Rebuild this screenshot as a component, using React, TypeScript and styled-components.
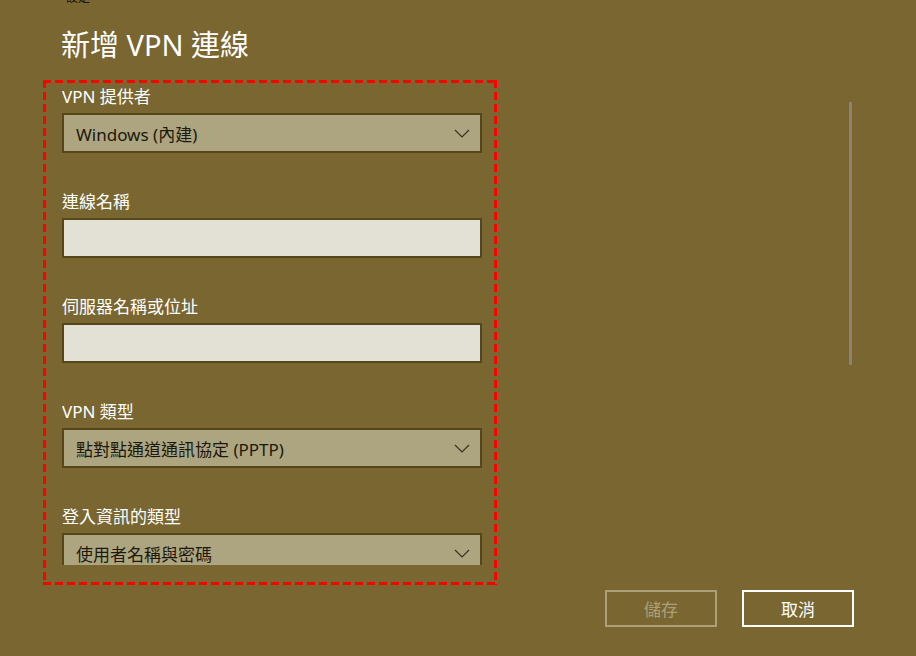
import React from 'react';
import styled, { createGlobalStyle } from 'styled-components';

const GlobalStyle = createGlobalStyle`
  html, body {
    margin: 0;
    padding: 0;
    background: #7a6630;
  }
  body {
    font-family: "Noto Sans", "Noto Sans CJK TC", sans-serif;
    width: 916px;
    height: 656px;
    overflow: hidden;
  }
`;

const Page = styled.div`
  width: 916px;
  height: 656px;
  background: #7a6630;
  display: flex;
  flex-direction: column;
  color: #ffffff;
`;

const TopCaption = styled.div`
  height: 4px;
  overflow: hidden;
  display: flex;
  align-items: flex-end;
  padding-left: 66px;
  font-size: 12px;
  line-height: 12px;
  color: #1a160a;
`;

const Heading = styled.h1`
  margin: 21px 0 15px 61px;
  font-size: 29px;
  line-height: 40px;
  font-weight: 400;
`;

const Body = styled.div`
  display: flex;
  padding-left: 43px;
`;

// red annotation frame: 3px dashes, 8px on / 4px off
const dashH = 'repeating-linear-gradient(90deg, #ff0000 0 8px, transparent 8px 12px)';
const dashV = 'repeating-linear-gradient(180deg, #ff0000 0 8px, transparent 8px 12px)';

const FormBox = styled.div`
  width: 454px;
  height: 505px;
  box-sizing: border-box;
  padding: 6px 15px 20px 19px;
  background:
    ${dashH} left top / 100% 3px no-repeat,
    ${dashH} left bottom / 100% 3px no-repeat,
    ${dashV} left top / 3px 100% no-repeat,
    ${dashV} right top / 3px 100% no-repeat;
  display: flex;
  flex-direction: column;
`;

const Scroller = styled.div`
  flex: 1;
  overflow: hidden;
  display: flex;
  flex-direction: column;
  gap: 38px;
`;

const Field = styled.div`
  display: flex;
  flex-direction: column;
  gap: 5px;
  flex-shrink: 0;
`;

const Label = styled.label`
  font-size: 17px;
  line-height: 22px;
  color: #ffffff;
`;

const Control = styled.div<{ $kind: 'select' | 'input' }>`
  height: 40px;
  box-sizing: border-box;
  border: 2px solid #56471b;
  background: ${p => (p.$kind === 'select' ? '#ada580' : '#e3e1d5')};
  display: flex;
  align-items: center;
  justify-content: space-between;
  padding: 0 10px 0 12px;
  font-size: 17px;
  color: #1c180c;
`;

const Rail = styled.div`
  flex: 1;
  display: flex;
  padding: 22px 0 0 352px;
`;

const Thumb = styled.div`
  width: 3px;
  height: 263px;
  background: #8a8474;
`;

const Footer = styled.div`
  display: flex;
  justify-content: flex-end;
  gap: 25px;
  padding: 5px 62px 0 0;
`;

const Button = styled.button<{ $disabled?: boolean }>`
  width: 112px;
  height: 37px;
  box-sizing: border-box;
  background: transparent;
  border: 2px solid ${p => (p.$disabled ? '#aaa17a' : '#ffffff')};
  color: ${p => (p.$disabled ? '#aaa17a' : '#ffffff')};
  font-family: "Noto Sans", "Noto Sans CJK TC", sans-serif;
  font-size: 17px;
  padding: 0;
  cursor: ${p => (p.$disabled ? 'default' : 'pointer')};
`;

const Chevron = () => (
  <svg width="16" height="9" viewBox="0 0 16 9" fill="none">
    <path d="M1 1 L8 8 L15 1" stroke="#3a3120" strokeWidth="1.2" />
  </svg>
);

const fields: { label: string; kind: 'select' | 'input'; value?: string }[] = [
  { label: 'VPN 提供者', kind: 'select', value: 'Windows (內建)' },
  { label: '連線名稱', kind: 'input' },
  { label: '伺服器名稱或位址', kind: 'input' },
  { label: 'VPN 類型', kind: 'select', value: '點對點通道通訊協定 (PPTP)' },
  { label: '登入資訊的類型', kind: 'select', value: '使用者名稱與密碼' },
];

export default function App() {
  return (
    <>
      <GlobalStyle />
      <Page>
        <TopCaption>設定</TopCaption>
        <Heading>新增 VPN 連線</Heading>
        <Body>
          <FormBox>
            <Scroller>
              {fields.map(f => (
                <Field key={f.label}>
                  <Label>{f.label}</Label>
                  <Control $kind={f.kind}>
                    <span>{f.value}</span>
                    {f.kind === 'select' && <Chevron />}
                  </Control>
                </Field>
              ))}
            </Scroller>
          </FormBox>
          <Rail>
            <Thumb />
          </Rail>
        </Body>
        <Footer>
          <Button $disabled>儲存</Button>
          <Button>取消</Button>
        </Footer>
      </Page>
    </>
  );
}
